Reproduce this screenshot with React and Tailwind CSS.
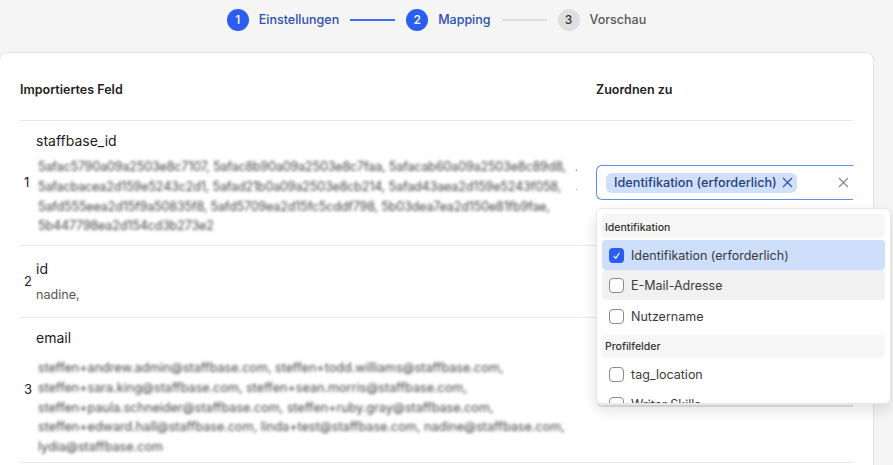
import React from "react";

const font = { fontFamily: "Inter, 'Liberation Sans', sans-serif" };

function Step({ n, label, active }) {
  return (
    <div className="flex items-center gap-[10px]">
      <div className={`flex h-[22px] w-[22px] items-center justify-center rounded-full text-[12px] font-medium ${active ? "bg-[#2a5df0] text-white" : "bg-[#dfdfe0] text-[#333]"}`}>{n}</div>
      <span className={`pt-[1px] text-[12.5px] font-medium ${active ? "text-[#2b4fb0]" : "text-[#555]"}`}>{label}</span>
    </div>
  );
}

function Row({ n, title, lines, blur, tight, textClass, select }) {
  return (
    <div className="flex items-center border-t border-[#e8e8e8]">
      <div className="flex w-[576px] shrink-0 items-center">
        <span className="w-[16px] pl-[4px] text-[13px] text-[#222]">{n}</span>
        <div className={`w-[560px] min-w-0 ${textClass}`}>
          <div className="text-[14px] leading-[20px] text-[#1c1c1c]">{title}</div>
          {lines.map(([text, suffix]) => (
            <div key={text} className="flex items-center whitespace-nowrap text-[12.6px] leading-[19.8px]">
              <span className={`${blur ? "ml-[2px] w-[537px] text-[#444] blur-[1.4px]" : "text-[#555]"} ${tight ? "tracking-[-0.19px]" : ""}`}>{text}</span>
              {suffix ? <span className="text-[10px] text-[#999]">{suffix}</span> : null}
            </div>
          ))}
        </div>
      </div>
      <div className="min-w-0 flex-1">{select}</div>
    </div>
  );
}

function ActiveSelect() {
  return (
    <div className="flex h-[35px] items-center justify-between rounded-l-[6px] border border-r-0 border-[#5f8df0] pl-[9px] pr-[4px]">
      <div className="flex h-[20px] items-center gap-[5px] rounded-[6px] bg-[#d0e0fb] pl-[8px] pr-[4px] text-[12.7px] font-medium text-[#27407f]">
        Identifikation (erforderlich)
        <svg width="11" height="11" viewBox="0 0 11 11" fill="none" stroke="#2b4fb0" strokeWidth="1.2"><path d="M1 1l9 9M10 1l-9 9" /></svg>
      </div>
      <svg width="11" height="11" viewBox="0 0 11 11" fill="none" stroke="#8a8a8a" strokeWidth="1.2"><path d="M1 1l9 9M10 1l-9 9" /></svg>
    </div>
  );
}

function IdleSelect() {
  return <div className="h-[35px] rounded-l-[6px] border-b-2 border-[#e2e2e2] bg-white" />;
}

function Option({ label, checked, hover }) {
  return (
    <div className={`flex h-[30px] items-center gap-[7px] rounded-[4px] pl-[7px] text-[12.5px] text-[#3a3a3a] ${checked ? "bg-[#cddffa]" : hover ? "bg-[#f1f1f1]" : ""}`}>
      {checked ? (
        <span className="flex h-[15px] w-[15px] items-center justify-center rounded-[4px] bg-[#2a5df0]">
          <svg width="9" height="9" viewBox="0 0 10 10" fill="none" stroke="white" strokeWidth="1.3"><path d="M2 5.5L4.2 8 8.2 2" /></svg>
        </span>
      ) : (
        <span className="h-[15px] w-[15px] rounded-[4px] border border-[#8a8a8a] bg-white" />
      )}
      <span className="pt-[2px]">{label}</span>
    </div>
  );
}

function GroupLabel({ children, className }) {
  return <div className={`flex items-center rounded-[4px] bg-[#f6f6f6] pl-[3px] text-[10.5px] font-medium text-[#333] ${className}`}>{children}</div>;
}

export default function App() {
  return (
    <div style={font} className="relative h-[465px] w-[893px] overflow-hidden bg-[#f5f5f6]">
      <div className="flex h-[52px] w-[873px] items-center justify-center pb-[13px]">
        <Step n="1" label="Einstellungen" active />
        <div className="mx-[11px] h-[2px] w-[45px] bg-[#3f6ff0]" />
        <Step n="2" label="Mapping" active />
        <div className="mx-[11px] h-[2px] w-[45px] bg-[#dedede]" />
        <Step n="3" label="Vorschau" />
      </div>

      <div className="ml-[-1px] h-[500px] w-[875px] overflow-hidden rounded-[8px] border border-[#e2e2e2] bg-white px-[20px]">
        <div className="flex h-[67px] items-center pt-[7px] text-[12.5px] font-semibold text-[#222]">
          <div className="w-[576px]">Importiertes Feld</div>
          <div>Zuordnen zu</div>
        </div>
        <Row
          n="1"
          title="staffbase_id"
          blur
          tight
          textClass="pt-[10px] pb-[8.8px] [&>div:nth-child(2)]:mt-[6px]"
          lines={[
            ["5afac5790a09a2503e8c7107, 5afac8b90a09a2503e8c7faa, 5afacab60a09a2503e8c89d8,", ","],
            ["5afacbacea2d159e5243c2d1, 5afad21b0a09a2503e8cb214, 5afad43aea2d159e5243f058,", "."],
            ["5afd555eea2d15f9a50835f8, 5afd5709ea2d15fc5cddf798, 5b03dea7ea2d150e81fb9fae,"],
            ["5b447798ea2d154cd3b273e2"],
          ]}
          select={<ActiveSelect />}
        />
        <Row
          n="2"
          title="id"
          textClass="pt-[13px] pb-[12.2px] [&>div:nth-child(2)]:mt-[6px]"
          lines={[["nadine,"]]}
          select={<IdleSelect />}
        />
        <Row
          n="3"
          title="email"
          blur
          textClass="pt-[10px] pb-[5px] [&>div:nth-child(2)]:mt-[10px]"
          lines={[
            ["steffen+andrew.admin@staffbase.com, steffen+todd.williams@staffbase.com,"],
            ["steffen+sara.king@staffbase.com, steffen+sean.morris@staffbase.com,"],
            ["steffen+paula.schneider@staffbase.com, steffen+ruby.gray@staffbase.com,"],
            ["steffen+edward.hall@staffbase.com, linda+test@staffbase.com, nadine@staffbase.com,"],
            ["lydia@staffbase.com"],
          ]}
          select={<IdleSelect />}
        />
        <div className="border-t border-[#e8e8e8]" />
      </div>

      <div className="absolute left-[596px] top-[208px] h-[196px] w-[295px] overflow-hidden rounded-[6px] border border-[#e6e6e6] bg-white px-[5px] pt-[5px] shadow-[0_6px_16px_rgba(0,0,0,0.12)]">
        <GroupLabel className="h-[24px] pt-[3px]">Identifikation</GroupLabel>
        <div className="mt-[2px]">
          <Option label="Identifikation (erforderlich)" checked />
          <Option label="E-Mail-Adresse" hover />
          <div className="mt-[1px]"><Option label="Nutzername" /></div>
        </div>
        <GroupLabel className="mt-[4px] h-[23px]">Profilfelder</GroupLabel>
        <div className="mt-[1px]">
          <Option label="tag_location" />
          <Option label="Writer Skills" />
        </div>
      </div>
    </div>
  );
}
